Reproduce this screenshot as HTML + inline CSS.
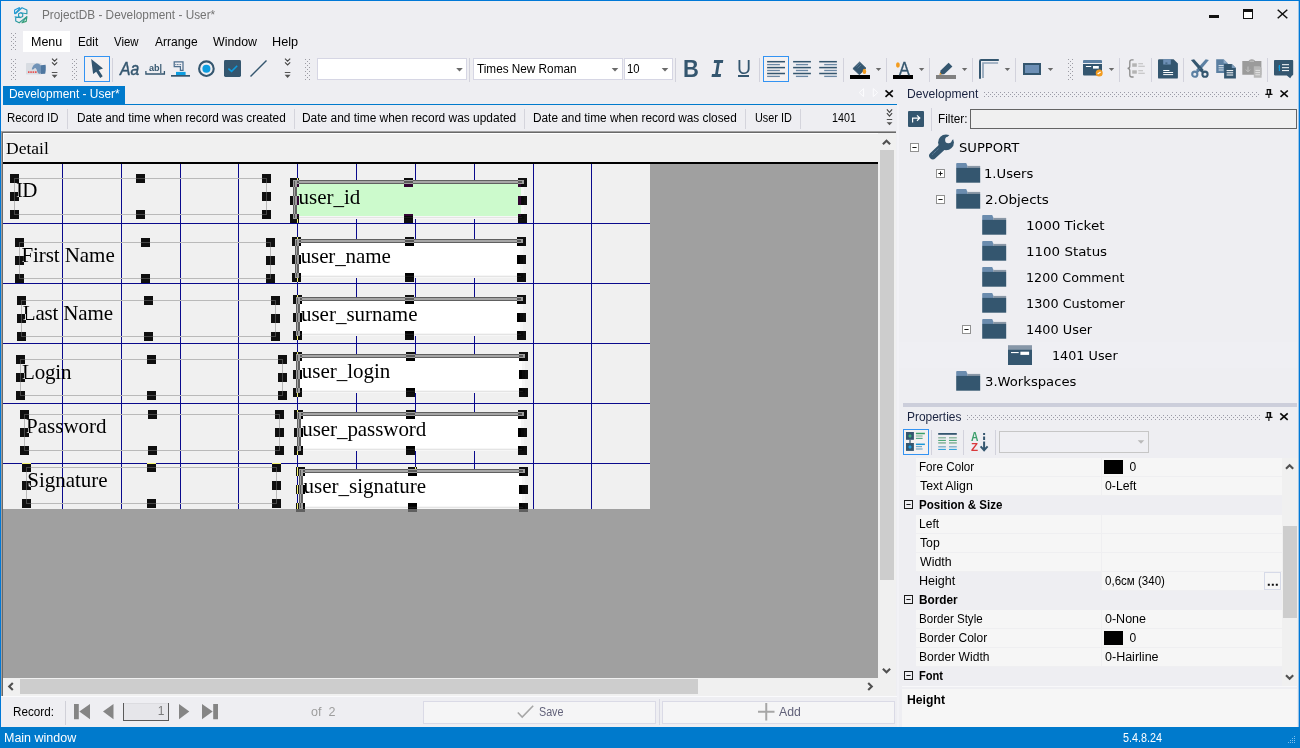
<!DOCTYPE html>
<html lang="en"><head><meta charset="utf-8"><title>ProjectDB - Development - User*</title>
<style>
html,body{margin:0;padding:0}
body{width:1300px;height:748px;overflow:hidden;position:relative;background:#eeeef2;font-family:"Liberation Sans",sans-serif;color:#000}
div,svg{position:absolute}
svg{overflow:visible}
.t{white-space:pre;line-height:0;font-size:12px;transform-origin:0 0}
.t i{display:inline-block;height:40px;width:0}
.f{font-family:"Liberation Serif",serif}
.v{font-family:"DejaVu Sans","Liberation Sans",sans-serif}
.h{width:9px;height:9px;background:#0f0f0f}
@supports (mix-blend-mode:difference){.h{background:#fff;mix-blend-mode:difference}}

</style></head><body>
<div style="left:0px;top:0px;width:1300px;height:1px;background:#0078d7;"></div>
<div style="left:0px;top:0px;width:1px;height:748px;background:#0078d7;"></div>
<div style="left:1299px;top:0px;width:1px;height:748px;background:#0078d7;"></div>
<div style="left:1298px;top:0px;width:1px;height:727px;background:rgba(0,120,215,0.35);"></div>
<div class="t" style="left:41.53px;top:-21.00px;transform:scaleX(0.9835);color:#737373;"><i></i>ProjectDB - Development - User*</div>
<div style="left:1209px;top:15px;width:10px;height:3px;background:#111;"></div>
<div style="left:1243px;top:9px;width:10px;height:10px;background:#fff;border:1px solid #111;border-top-width:3px;box-sizing:border-box;"></div>
<svg style="left:1277px;top:9px;" width="11" height="10" viewBox="0 0 11 10"><path d="M0.7 0.7L10.3 9.3M10.3 0.7L0.7 9.3" stroke="#111" stroke-width="1.5" fill="none"/></svg>
<div style="left:23px;top:31px;width:46.5px;height:21px;background:#fff;"></div>
<div class="t" style="left:31.18px;top:6.00px;transform:scaleX(1.0412);"><i></i>Menu</div>
<div class="t" style="left:77.74px;top:6.00px;transform:scaleX(0.9741);"><i></i>Edit</div>
<div class="t" style="left:113.95px;top:6.00px;transform:scaleX(0.9505);"><i></i>View</div>
<div class="t" style="left:154.98px;top:6.00px;"><i></i>Arrange</div>
<div class="t" style="left:212.95px;top:6.00px;transform:scaleX(1.0314);"><i></i>Window</div>
<div class="t" style="left:271.96px;top:6.00px;transform:scaleX(1.0557);"><i></i>Help</div>
<div style="left:3px;top:86px;width:121.5px;height:18px;background:#007acc;"></div>
<div style="left:3px;top:103.5px;width:894px;height:1.5px;background:#007acc;"></div>
<div class="t" style="left:8.52px;top:58.40px;transform:scaleX(0.9936);color:#fff;"><i></i>Development - User*</div>
<div class="t" style="left:7.06px;top:82.00px;transform:scaleX(0.9530);"><i></i>Record ID</div>
<div class="t" style="left:76.53px;top:82.00px;transform:scaleX(0.9840);"><i></i>Date and time when record was created</div>
<div class="t" style="left:302.02px;top:82.00px;transform:scaleX(0.9943);"><i></i>Date and time when record was updated</div>
<div class="t" style="left:533.03px;top:82.00px;transform:scaleX(0.9853);"><i></i>Date and time when record was closed</div>
<div class="t" style="left:754.66px;top:82.00px;transform:scaleX(0.9061);"><i></i>User ID</div>
<div class="t" style="left:831.69px;top:82.00px;transform:scaleX(0.8929);"><i></i>1401</div>
<div style="left:67.0px;top:109px;width:1px;height:20px;background:#d4d4dc;"></div>
<div style="left:293.5px;top:109px;width:1px;height:20px;background:#d4d4dc;"></div>
<div style="left:524.0px;top:109px;width:1px;height:20px;background:#d4d4dc;"></div>
<div style="left:745.0px;top:109px;width:1px;height:20px;background:#d4d4dc;"></div>
<div style="left:800.0px;top:109px;width:1px;height:20px;background:#d4d4dc;"></div>
<div style="left:1px;top:131px;width:895px;height:564.5px;background:#f0f0f0;"></div>
<div style="left:1px;top:131px;width:895px;height:1px;background:#a0a0a0;"></div>
<div style="left:2px;top:132px;width:894px;height:1px;background:#696969;"></div>
<div style="left:3px;top:133px;width:875px;height:1px;background:#fff;"></div>
<div style="left:1px;top:131px;width:1px;height:564.5px;background:#a0a0a0;"></div>
<div style="left:2px;top:132px;width:1px;height:563.5px;background:#696969;"></div>
<div style="left:3px;top:133px;width:1px;height:29px;background:#fff;"></div>
<div class="t f" style="left:6.21px;top:113.60px;font-size:17px;transform:scaleX(1.0311);"><i></i>Detail</div>
<div style="left:3px;top:162.3px;width:875px;height:1.7px;background:#000;"></div>
<div style="left:650px;top:164px;width:228px;height:514px;background:#a0a0a0;"></div>
<div style="left:3px;top:509px;width:647px;height:169px;background:#a0a0a0;"></div>
<div style="left:62px;top:164px;width:1px;height:345px;background:#0a0a8c;"></div>
<div style="left:121px;top:164px;width:1px;height:345px;background:#0a0a8c;"></div>
<div style="left:180px;top:164px;width:1px;height:345px;background:#0a0a8c;"></div>
<div style="left:238px;top:164px;width:1px;height:345px;background:#0a0a8c;"></div>
<div style="left:297px;top:164px;width:1px;height:345px;background:#0a0a8c;"></div>
<div style="left:356px;top:164px;width:1px;height:345px;background:#0a0a8c;"></div>
<div style="left:415px;top:164px;width:1px;height:345px;background:#0a0a8c;"></div>
<div style="left:474px;top:164px;width:1px;height:345px;background:#0a0a8c;"></div>
<div style="left:533px;top:164px;width:1px;height:345px;background:#0a0a8c;"></div>
<div style="left:591px;top:164px;width:1px;height:345px;background:#0a0a8c;"></div>
<div style="left:3px;top:223px;width:647px;height:1px;background:#0a0a8c;"></div>
<div style="left:3px;top:283px;width:647px;height:1px;background:#0a0a8c;"></div>
<div style="left:3px;top:343px;width:647px;height:1px;background:#0a0a8c;"></div>
<div style="left:3px;top:403px;width:647px;height:1px;background:#0a0a8c;"></div>
<div style="left:3px;top:463px;width:647px;height:1px;background:#0a0a8c;"></div>
<div style="left:14px;top:178px;width:253px;height:37px;border:1px solid #b9b9b9;box-sizing:border-box;"></div>
<div class="t f" style="left:15.99px;top:157.40px;font-size:21px;letter-spacing:-0.830px;"><i></i>ID</div>
<div style="left:19px;top:242px;width:252px;height:37px;border:1px solid #b9b9b9;box-sizing:border-box;"></div>
<div class="t f" style="left:21.41px;top:221.60px;font-size:21px;letter-spacing:-0.068px;"><i></i>First Name</div>
<div style="left:21px;top:300px;width:254.5px;height:37px;border:1px solid #b9b9b9;box-sizing:border-box;"></div>
<div class="t f" style="left:22.81px;top:280.00px;font-size:21px;letter-spacing:-0.170px;"><i></i>Last Name</div>
<div style="left:20px;top:359px;width:263px;height:37px;border:1px solid #b9b9b9;box-sizing:border-box;"></div>
<div class="t f" style="left:22.11px;top:338.60px;font-size:21px;letter-spacing:-0.191px;"><i></i>Login</div>
<div style="left:24px;top:414px;width:256px;height:37px;border:1px solid #b9b9b9;box-sizing:border-box;"></div>
<div class="t f" style="left:26.11px;top:393.40px;font-size:21px;letter-spacing:-0.011px;"><i></i>Password</div>
<div style="left:26px;top:467px;width:251px;height:37px;border:1px solid #b9b9b9;box-sizing:border-box;"></div>
<div class="t f" style="left:27.31px;top:446.50px;font-size:21px;letter-spacing:-0.024px;"><i></i>Signature</div>
<div style="left:292.5px;top:180px;width:231.0px;height:39px;background:#f6f6f6;"></div>
<div style="left:296.5px;top:184px;width:224.0px;height:31.5px;background:#ccfacc;"></div>
<div style="left:296.5px;top:216.5px;width:225.0px;height:1px;background:#e4e4e4;"></div>
<div style="left:292.5px;top:180px;width:231.0px;height:4px;background:#606060;"></div>
<div style="left:293.8px;top:181.3px;width:228.4px;height:1.4px;background:#a6a6a6;"></div>
<div style="left:292.5px;top:180px;width:4px;height:39px;background:#606060;"></div>
<div style="left:293.8px;top:181.3px;width:1.4px;height:36.4px;background:#a6a6a6;"></div>
<div class="t f" style="left:298.48px;top:163.75px;font-size:21px;letter-spacing:-0.008px;"><i></i>user_id</div>
<div style="left:294.5px;top:239px;width:228.0px;height:39px;background:#f6f6f6;"></div>
<div style="left:298.5px;top:243px;width:221.0px;height:31.5px;background:#fff;"></div>
<div style="left:298.5px;top:275.5px;width:222.0px;height:1px;background:#e4e4e4;"></div>
<div style="left:294.5px;top:239px;width:228.0px;height:4px;background:#606060;"></div>
<div style="left:295.8px;top:240.3px;width:225.4px;height:1.4px;background:#a6a6a6;"></div>
<div style="left:294.5px;top:239px;width:4px;height:39px;background:#606060;"></div>
<div style="left:295.8px;top:240.3px;width:1.4px;height:36.4px;background:#a6a6a6;"></div>
<div class="t f" style="left:300.73px;top:222.50px;font-size:21px;letter-spacing:-0.123px;"><i></i>user_name</div>
<div style="left:295.5px;top:297px;width:227.0px;height:39px;background:#f6f6f6;"></div>
<div style="left:299.5px;top:301px;width:220.0px;height:31.5px;background:#fff;"></div>
<div style="left:299.5px;top:333.5px;width:221.0px;height:1px;background:#e4e4e4;"></div>
<div style="left:295.5px;top:297px;width:227.0px;height:4px;background:#606060;"></div>
<div style="left:296.8px;top:298.3px;width:224.4px;height:1.4px;background:#a6a6a6;"></div>
<div style="left:295.5px;top:297px;width:4px;height:39px;background:#606060;"></div>
<div style="left:296.8px;top:298.3px;width:1.4px;height:36.4px;background:#a6a6a6;"></div>
<div class="t f" style="left:300.98px;top:280.80px;font-size:21px;letter-spacing:-0.013px;"><i></i>user_surname</div>
<div style="left:295.5px;top:354px;width:229.0px;height:39px;background:#f6f6f6;"></div>
<div style="left:299.5px;top:358px;width:222.0px;height:31.5px;background:#fff;"></div>
<div style="left:299.5px;top:390.5px;width:223.0px;height:1px;background:#e4e4e4;"></div>
<div style="left:295.5px;top:354px;width:229.0px;height:4px;background:#606060;"></div>
<div style="left:296.8px;top:355.3px;width:226.4px;height:1.4px;background:#a6a6a6;"></div>
<div style="left:295.5px;top:354px;width:4px;height:39px;background:#606060;"></div>
<div style="left:296.8px;top:355.3px;width:1.4px;height:36.4px;background:#a6a6a6;"></div>
<div class="t f" style="left:301.73px;top:338.00px;font-size:21px;letter-spacing:-0.008px;"><i></i>user_login</div>
<div style="left:296.5px;top:412px;width:227.0px;height:39px;background:#f6f6f6;"></div>
<div style="left:300.5px;top:416px;width:220.0px;height:31.5px;background:#fff;"></div>
<div style="left:300.5px;top:448.5px;width:221.0px;height:1px;background:#e4e4e4;"></div>
<div style="left:296.5px;top:412px;width:227.0px;height:4px;background:#606060;"></div>
<div style="left:297.8px;top:413.3px;width:224.4px;height:1.4px;background:#a6a6a6;"></div>
<div style="left:296.5px;top:412px;width:4px;height:39px;background:#606060;"></div>
<div style="left:297.8px;top:413.3px;width:1.4px;height:36.4px;background:#a6a6a6;"></div>
<div class="t f" style="left:302.23px;top:395.50px;font-size:21px;letter-spacing:-0.065px;"><i></i>user_password</div>
<div style="left:298.5px;top:469px;width:226.0px;height:40px;background:#f6f6f6;"></div>
<div style="left:302.5px;top:473px;width:219.0px;height:32.5px;background:#fff;"></div>
<div style="left:302.5px;top:506.5px;width:220.0px;height:1px;background:#e4e4e4;"></div>
<div style="left:298.5px;top:469px;width:226.0px;height:4px;background:#606060;"></div>
<div style="left:299.8px;top:470.3px;width:223.4px;height:1.4px;background:#a6a6a6;"></div>
<div style="left:298.5px;top:469px;width:4px;height:40px;background:#606060;"></div>
<div style="left:299.8px;top:470.3px;width:1.4px;height:37.4px;background:#a6a6a6;"></div>
<div class="t f" style="left:303.48px;top:452.50px;font-size:21px;letter-spacing:0.020px;"><i></i>user_signature</div>
<div class="h" style="left:10px;top:174px"></div>
<div class="h" style="left:10px;top:192px"></div>
<div class="h" style="left:10px;top:210px"></div>
<div class="h" style="left:136px;top:174px"></div>
<div class="h" style="left:136px;top:210px"></div>
<div class="h" style="left:262px;top:174px"></div>
<div class="h" style="left:262px;top:192px"></div>
<div class="h" style="left:262px;top:210px"></div>
<div class="h" style="left:15px;top:238px"></div>
<div class="h" style="left:15px;top:256px"></div>
<div class="h" style="left:15px;top:274px"></div>
<div class="h" style="left:141px;top:238px"></div>
<div class="h" style="left:141px;top:274px"></div>
<div class="h" style="left:266px;top:238px"></div>
<div class="h" style="left:266px;top:256px"></div>
<div class="h" style="left:266px;top:274px"></div>
<div class="h" style="left:17px;top:296px"></div>
<div class="h" style="left:17px;top:314px"></div>
<div class="h" style="left:17px;top:332px"></div>
<div class="h" style="left:144px;top:296px"></div>
<div class="h" style="left:144px;top:332px"></div>
<div class="h" style="left:270.5px;top:296px"></div>
<div class="h" style="left:270.5px;top:314px"></div>
<div class="h" style="left:270.5px;top:332px"></div>
<div class="h" style="left:16px;top:355px"></div>
<div class="h" style="left:16px;top:373px"></div>
<div class="h" style="left:16px;top:391px"></div>
<div class="h" style="left:147px;top:355px"></div>
<div class="h" style="left:147px;top:391px"></div>
<div class="h" style="left:278px;top:355px"></div>
<div class="h" style="left:278px;top:373px"></div>
<div class="h" style="left:278px;top:391px"></div>
<div class="h" style="left:20px;top:410px"></div>
<div class="h" style="left:20px;top:428px"></div>
<div class="h" style="left:20px;top:446px"></div>
<div class="h" style="left:148px;top:410px"></div>
<div class="h" style="left:148px;top:446px"></div>
<div class="h" style="left:275px;top:410px"></div>
<div class="h" style="left:275px;top:428px"></div>
<div class="h" style="left:275px;top:446px"></div>
<div class="h" style="left:22px;top:463px"></div>
<div class="h" style="left:22px;top:481px"></div>
<div class="h" style="left:22px;top:499px"></div>
<div class="h" style="left:147px;top:463px"></div>
<div class="h" style="left:147px;top:499px"></div>
<div class="h" style="left:272px;top:463px"></div>
<div class="h" style="left:272px;top:481px"></div>
<div class="h" style="left:272px;top:499px"></div>
<div class="h" style="left:290px;top:178px"></div>
<div class="h" style="left:290px;top:196px"></div>
<div class="h" style="left:290px;top:214px"></div>
<div class="h" style="left:404px;top:178px"></div>
<div class="h" style="left:404px;top:214px"></div>
<div class="h" style="left:518px;top:178px"></div>
<div class="h" style="left:518px;top:196px"></div>
<div class="h" style="left:518px;top:214px"></div>
<div class="h" style="left:292px;top:237px"></div>
<div class="h" style="left:292px;top:255px"></div>
<div class="h" style="left:292px;top:273px"></div>
<div class="h" style="left:405px;top:237px"></div>
<div class="h" style="left:405px;top:273px"></div>
<div class="h" style="left:517px;top:237px"></div>
<div class="h" style="left:517px;top:255px"></div>
<div class="h" style="left:517px;top:273px"></div>
<div class="h" style="left:293px;top:295px"></div>
<div class="h" style="left:293px;top:313px"></div>
<div class="h" style="left:293px;top:331px"></div>
<div class="h" style="left:405px;top:295px"></div>
<div class="h" style="left:405px;top:331px"></div>
<div class="h" style="left:517px;top:295px"></div>
<div class="h" style="left:517px;top:313px"></div>
<div class="h" style="left:517px;top:331px"></div>
<div class="h" style="left:293px;top:352px"></div>
<div class="h" style="left:293px;top:370px"></div>
<div class="h" style="left:293px;top:388px"></div>
<div class="h" style="left:406px;top:352px"></div>
<div class="h" style="left:406px;top:388px"></div>
<div class="h" style="left:519px;top:352px"></div>
<div class="h" style="left:519px;top:370px"></div>
<div class="h" style="left:519px;top:388px"></div>
<div class="h" style="left:294px;top:410px"></div>
<div class="h" style="left:294px;top:428px"></div>
<div class="h" style="left:294px;top:446px"></div>
<div class="h" style="left:406px;top:410px"></div>
<div class="h" style="left:406px;top:446px"></div>
<div class="h" style="left:518px;top:410px"></div>
<div class="h" style="left:518px;top:428px"></div>
<div class="h" style="left:518px;top:446px"></div>
<div class="h" style="left:296px;top:467px"></div>
<div class="h" style="left:296px;top:485px"></div>
<div class="h" style="left:296px;top:503px"></div>
<div class="h" style="left:408px;top:467px"></div>
<div class="h" style="left:408px;top:503px"></div>
<div class="h" style="left:519px;top:467px"></div>
<div class="h" style="left:519px;top:485px"></div>
<div class="h" style="left:519px;top:503px"></div>
<div style="left:878px;top:132.5px;width:18px;height:563px;background:#f0f0f0;"></div>
<div style="left:879.5px;top:150px;width:14.5px;height:430px;background:#cdcdcd;"></div>
<svg style="left:0px;top:0px;" width="1" height="1" viewBox="0 0 1 1"><path d="M882.9 144.3L886.5 140.7L890.1 144.3" stroke="#505050" stroke-width="2.1" fill="none"/></svg>
<svg style="left:0px;top:0px;" width="1" height="1" viewBox="0 0 1 1"><path d="M882.9 668.7L886.5 672.3L890.1 668.7" stroke="#505050" stroke-width="2.1" fill="none"/></svg>
<div style="left:3px;top:678px;width:875px;height:17.5px;background:#f0f0f0;"></div>
<div style="left:20px;top:679px;width:678px;height:15px;background:#cdcdcd;"></div>
<svg style="left:0px;top:0px;" width="1" height="1" viewBox="0 0 1 1"><path d="M12.8 682.9L9.2 686.5L12.8 690.1" stroke="#505050" stroke-width="2.1" fill="none"/></svg>
<svg style="left:0px;top:0px;" width="1" height="1" viewBox="0 0 1 1"><path d="M868.2 682.9L871.8 686.5L868.2 690.1" stroke="#505050" stroke-width="2.1" fill="none"/></svg>
<div style="left:1px;top:695.5px;width:897px;height:1.5px;background:#fafafc;"></div>
<div class="t" style="left:12.54px;top:675.80px;transform:scaleX(0.9738);"><i></i>Record:</div>
<div style="left:65px;top:701px;width:1px;height:24px;background:#d0d0d8;"></div>
<svg style="left:74px;top:704px;" width="16" height="15.2" viewBox="0 0 16 15.2"><path d="M0 0h4.8v15.2h-4.8zM16 0v15.2l-10.7-7.6z" fill="#858585"/></svg>
<svg style="left:103px;top:704px;" width="10.5" height="15.2" viewBox="0 0 10.5 15.2"><path d="M10.5 0v15.2l-10.5-7.6z" fill="#858585"/></svg>
<div style="left:123px;top:703px;width:46px;height:18px;background:#e6e6ea;border:1px solid #5a5a5a;border-top-color:#dcdce0;box-sizing:border-box;"></div>
<div style="left:123px;top:703px;width:1px;height:2px;background:#5a5a5a;"></div>
<div style="left:168px;top:703px;width:1px;height:2px;background:#5a5a5a;"></div>
<div class="t" style="left:157.84px;top:675.00px;color:#7a7a7a;"><i></i>1</div>
<svg style="left:179px;top:704px;" width="10.5" height="15.2" viewBox="0 0 10.5 15.2"><path d="M0 0v15.2l10.3-7.6z" fill="#858585"/></svg>
<svg style="left:202px;top:704px;" width="16" height="15.2" viewBox="0 0 16 15.2"><path d="M11.2 0h4.8v15.2h-4.8zM0 0v15.2l10.7-7.6z" fill="#858585"/></svg>
<div class="t" style="left:310.72px;top:675.75px;transform:scaleX(1.0450);color:#9d9d9d;"><i></i>of  2</div>
<div style="left:423px;top:700.5px;width:233px;height:23px;background:#f5f5f6;border:1px solid #dadae6;box-sizing:border-box;"></div>
<svg style="left:517px;top:705px;" width="17" height="13" viewBox="0 0 17 13"><path d="M0.8 7.5L5.2 12L16.2 0.8" stroke="#a6a6a6" stroke-width="1.6" fill="none"/></svg>
<div class="t" style="left:539.02px;top:676.25px;transform:scaleX(0.8942);color:#62627a;"><i></i>Save</div>
<div style="left:658.5px;top:699px;width:1px;height:26px;background:#d8d8e2;"></div>
<div style="left:662px;top:700.5px;width:232.5px;height:23px;background:#f5f5f6;border:1px solid #dadae6;box-sizing:border-box;"></div>
<svg style="left:757.5px;top:703px;" width="17" height="17.5" viewBox="0 0 17 17.5"><path d="M8.25 0V17.5M0 8.75H16.5" stroke="#a6a6a6" stroke-width="2" fill="none"/></svg>
<div class="t" style="left:779.48px;top:675.75px;transform:scaleX(1.0216);color:#62627a;"><i></i>Add</div>
<div style="left:0px;top:727px;width:1300px;height:21px;background:#007acc;"></div>
<div class="t" style="left:3.88px;top:702.00px;transform:scaleX(1.0408);color:#fff;"><i></i>Main window</div>
<div class="t" style="left:1123.37px;top:702.00px;transform:scaleX(0.8980);color:#fff;"><i></i>5.4.8.24</div>
<svg style="left:1288px;top:736px;" width="8" height="8" viewBox="0 0 8 8"><g fill="#7fc1ee"><rect x="6" y="0" width="1" height="1"/><rect x="4" y="2" width="1" height="1"/><rect x="6" y="2" width="1" height="1"/><rect x="2" y="4" width="1" height="1"/><rect x="4" y="4" width="1" height="1"/><rect x="6" y="4" width="1" height="1"/><rect x="0" y="6" width="1" height="1"/><rect x="2" y="6" width="1" height="1"/><rect x="4" y="6" width="1" height="1"/><rect x="6" y="6" width="1" height="1"/></g></svg>
<svg style="left:13.5px;top:6.5px;" width="14.5" height="17" viewBox="0 0 14.5 17"><defs><linearGradient id="lg" gradientUnits="userSpaceOnUse" x1="1" y1="1" x2="13" y2="16"><stop offset="0" stop-color="#1c98e4"/><stop offset="0.55" stop-color="#2a9bb0"/><stop offset="1" stop-color="#3aa05e"/></linearGradient></defs>
<g fill="none" stroke="url(#lg)" stroke-width="1.15" stroke-linejoin="round">
<path d="M0.6 2.9L5.2 0.7L6 1.2L1.1 6.6L0.6 6.4Z"/>
<path d="M1.4 6.7L8 0.7L12.9 2.9V6.8L6.5 5.7"/>
<path d="M4.6 6.8L6.6 5.8L8.7 6.8V9.5L6.6 10.5L4.6 9.5Z"/>
<path d="M0.6 9.8L6.6 10.6M1.7 10V14L5.2 15.8L12.9 9.6"/>
<path d="M8 15.8L12.9 9.6L12.2 14.4Z"/>
</g></svg>
<svg style="left:11px;top:33px;" width="5" height="18" viewBox="0 0 5 18"><g fill="#9c9ca4"><rect x="0" y="0" width="1" height="1"/><rect x="4" y="0" width="1" height="1"/><rect x="2" y="2" width="1" height="1"/><rect x="0" y="4" width="1" height="1"/><rect x="4" y="4" width="1" height="1"/><rect x="2" y="6" width="1" height="1"/><rect x="0" y="8" width="1" height="1"/><rect x="4" y="8" width="1" height="1"/><rect x="2" y="10" width="1" height="1"/><rect x="0" y="12" width="1" height="1"/><rect x="4" y="12" width="1" height="1"/><rect x="2" y="14" width="1" height="1"/><rect x="0" y="16" width="1" height="1"/><rect x="4" y="16" width="1" height="1"/></g></svg>
<svg style="left:11px;top:59px;" width="5" height="22" viewBox="0 0 5 22"><g fill="#9c9ca4"><rect x="0" y="0" width="1" height="1"/><rect x="4" y="0" width="1" height="1"/><rect x="2" y="2" width="1" height="1"/><rect x="0" y="4" width="1" height="1"/><rect x="4" y="4" width="1" height="1"/><rect x="2" y="6" width="1" height="1"/><rect x="0" y="8" width="1" height="1"/><rect x="4" y="8" width="1" height="1"/><rect x="2" y="10" width="1" height="1"/><rect x="0" y="12" width="1" height="1"/><rect x="4" y="12" width="1" height="1"/><rect x="2" y="14" width="1" height="1"/><rect x="0" y="16" width="1" height="1"/><rect x="4" y="16" width="1" height="1"/><rect x="2" y="18" width="1" height="1"/><rect x="0" y="20" width="1" height="1"/><rect x="4" y="20" width="1" height="1"/></g></svg>
<svg style="left:72px;top:59px;" width="5" height="22" viewBox="0 0 5 22"><g fill="#9c9ca4"><rect x="0" y="0" width="1" height="1"/><rect x="4" y="0" width="1" height="1"/><rect x="2" y="2" width="1" height="1"/><rect x="0" y="4" width="1" height="1"/><rect x="4" y="4" width="1" height="1"/><rect x="2" y="6" width="1" height="1"/><rect x="0" y="8" width="1" height="1"/><rect x="4" y="8" width="1" height="1"/><rect x="2" y="10" width="1" height="1"/><rect x="0" y="12" width="1" height="1"/><rect x="4" y="12" width="1" height="1"/><rect x="2" y="14" width="1" height="1"/><rect x="0" y="16" width="1" height="1"/><rect x="4" y="16" width="1" height="1"/><rect x="2" y="18" width="1" height="1"/><rect x="0" y="20" width="1" height="1"/><rect x="4" y="20" width="1" height="1"/></g></svg>
<svg style="left:305px;top:59px;" width="5" height="22" viewBox="0 0 5 22"><g fill="#9c9ca4"><rect x="0" y="0" width="1" height="1"/><rect x="4" y="0" width="1" height="1"/><rect x="2" y="2" width="1" height="1"/><rect x="0" y="4" width="1" height="1"/><rect x="4" y="4" width="1" height="1"/><rect x="2" y="6" width="1" height="1"/><rect x="0" y="8" width="1" height="1"/><rect x="4" y="8" width="1" height="1"/><rect x="2" y="10" width="1" height="1"/><rect x="0" y="12" width="1" height="1"/><rect x="4" y="12" width="1" height="1"/><rect x="2" y="14" width="1" height="1"/><rect x="0" y="16" width="1" height="1"/><rect x="4" y="16" width="1" height="1"/><rect x="2" y="18" width="1" height="1"/><rect x="0" y="20" width="1" height="1"/><rect x="4" y="20" width="1" height="1"/></g></svg>
<svg style="left:1068px;top:59px;" width="5" height="22" viewBox="0 0 5 22"><g fill="#9c9ca4"><rect x="0" y="0" width="1" height="1"/><rect x="4" y="0" width="1" height="1"/><rect x="2" y="2" width="1" height="1"/><rect x="0" y="4" width="1" height="1"/><rect x="4" y="4" width="1" height="1"/><rect x="2" y="6" width="1" height="1"/><rect x="0" y="8" width="1" height="1"/><rect x="4" y="8" width="1" height="1"/><rect x="2" y="10" width="1" height="1"/><rect x="0" y="12" width="1" height="1"/><rect x="4" y="12" width="1" height="1"/><rect x="2" y="14" width="1" height="1"/><rect x="0" y="16" width="1" height="1"/><rect x="4" y="16" width="1" height="1"/><rect x="2" y="18" width="1" height="1"/><rect x="0" y="20" width="1" height="1"/><rect x="4" y="20" width="1" height="1"/></g></svg>
<svg style="left:26px;top:63px;" width="20" height="12" viewBox="0 0 20 12"><rect x="0" y="0" width="15.5" height="11.6" rx="0.8" fill="#d8dce2"/>
<path d="M2 8.2h1.5v1.7h-1.5zM4.3 8.2h1.5v1.7h-1.5zM6.6 8.2h1.5v1.7h-1.5zM8.9 8.2h1.7v1.7h-1.7z" fill="#e85050"/>
<path d="M5.8 6.2C6.5 3 8.5 0.6 11.5 0.6C13.2 0.8 14 2 15 2.4V10.6C13 11 12 10.4 11.2 8.4C10.6 6 9.6 4.4 8.4 5.4C7.6 6.4 6.6 6.8 5.8 6.2Z" fill="#7193b7"/>
<path d="M15 2.2L19.6 1.8C20 5 19.8 8 19.2 10.8L15 10.9Z" fill="#4f77a0"/></svg>
<svg style="left:0px;top:0px;" width="1" height="1" viewBox="0 0 1 1"><path d="M52.0 58.6l2.6 2.6l2.6 -2.6M52.0 62.4l2.6 2.6l2.6 -2.6" stroke="#444" stroke-width="1.1" fill="none"/><path d="M51.800000000000004 71.9h5.6v1.1h-5.6zM51.7 74.7h5.8l-2.9 3.2z" fill="#555"/></svg>
<div style="left:84px;top:56px;width:26px;height:26px;background:#f4f1f1;border:1px solid #3393f3;box-sizing:border-box;"></div>
<svg style="left:0px;top:0px;" width="1" height="1" viewBox="0 0 1 1"><path d="M91.2 58.9L103 68.4L98.7 70L102.7 76.2L100.2 78L96.2 71.7L93.1 73.9Z" fill="#34566f"/></svg>
<div style="left:112px;top:58px;width:1px;height:24px;background:#d2d2dc;"></div>
<div class="t" style="left:119.98px;top:35.00px;font-size:18px;transform:scaleX(0.8699);color:#34566f;font-style:italic;-webkit-text-stroke:0.45px #34566f;"><i></i>Aa</div>
<div class="t" style="left:148.94px;top:30.60px;font-size:9.2px;transform:scaleX(0.9874);color:#34566f;font-weight:700;"><i></i>ab|</div>
<svg style="left:0px;top:0px;" width="1" height="1" viewBox="0 0 1 1"><path d="M145.9 71V74H164.4V71" stroke="#34566f" stroke-width="1.3" fill="none"/></svg>
<svg style="left:171px;top:61px;" width="20" height="16" viewBox="0 0 20 16"><path d="M3.2 0.9H12V9.3H9.4V5.6H3.2Z" fill="none" stroke="#4e6f8e" stroke-width="1.25"/><path d="M4.3 3.6h6.4" stroke="#4e6f8e" stroke-width="1" stroke-dasharray="1 0.6"/><rect x="5" y="10.9" width="9.6" height="3.2" fill="#0c9de0"/><rect x="0" y="14" width="19" height="1.7" fill="#34566f"/></svg>
<svg style="left:0px;top:0px;" width="1" height="1" viewBox="0 0 1 1"><circle cx="206.4" cy="68.7" r="7.3" fill="none" stroke="#34566f" stroke-width="2.1"/><circle cx="206.4" cy="68.7" r="4" fill="#0c9de0"/></svg>
<svg style="left:224px;top:60px;" width="17" height="17" viewBox="0 0 17 17"><rect x="0" y="0" width="17" height="17" rx="1.4" fill="#34566f"/><path d="M4.4 8.6L7.6 11.4L13.2 5.7" stroke="#0c9de0" stroke-width="1.5" fill="none"/></svg>
<svg style="left:0px;top:0px;" width="1" height="1" viewBox="0 0 1 1"><path d="M250.5 76.5L266.5 60.5" stroke="#34566f" stroke-width="1.4"/></svg>
<svg style="left:0px;top:0px;" width="1" height="1" viewBox="0 0 1 1"><path d="M285.0 58.6l2.6 2.6l2.6 -2.6M285.0 62.4l2.6 2.6l2.6 -2.6" stroke="#444" stroke-width="1.1" fill="none"/><path d="M284.8 71.9h5.6v1.1h-5.6zM284.70000000000005 74.7h5.8l-2.9 3.2z" fill="#555"/></svg>
<div style="left:317px;top:58px;width:150px;height:22px;background:#fff;border:1px solid #d6d6e4;box-sizing:border-box;"></div>
<svg style="left:0px;top:0px;" width="1" height="1" viewBox="0 0 1 1"><path d="M456.2 68.0h6.6l-3.3 3.6z" fill="#6a6a6a"/></svg>
<div style="left:469px;top:58px;width:1px;height:24px;background:#d2d2dc;"></div>
<div style="left:473px;top:58px;width:149.5px;height:22px;background:#fff;border:1px solid #d6d6e4;box-sizing:border-box;"></div>
<div class="t" style="left:477.24px;top:33.00px;transform:scaleX(0.9796);"><i></i>Times New Roman</div>
<svg style="left:0px;top:0px;" width="1" height="1" viewBox="0 0 1 1"><path d="M611.7 68.0h6.6l-3.3 3.6z" fill="#6a6a6a"/></svg>
<div style="left:623.5px;top:58px;width:49.5px;height:22px;background:#fff;border:1px solid #d6d6e4;box-sizing:border-box;"></div>
<div class="t" style="left:626.64px;top:33.00px;transform:scaleX(0.9394);"><i></i>10</div>
<svg style="left:0px;top:0px;" width="1" height="1" viewBox="0 0 1 1"><path d="M661.7 68.0h6.6l-3.3 3.6z" fill="#6a6a6a"/></svg>
<div style="left:675px;top:58px;width:1px;height:24px;background:#d2d2dc;"></div>
<div class="t" style="left:683.35px;top:36.90px;font-size:23.5px;transform:scaleX(0.9332);color:#34566f;font-weight:700;"><i></i>B</div>
<div class="t" style="left:711.2px;top:36.900000000000006px;font-size:25.6px;font-family:'Liberation Mono',monospace;font-style:italic;font-weight:700;color:#34566f;transform:scaleX(0.8)"><i></i>I</div>
<div class="t" style="left:736.60px;top:34.30px;font-size:19.6px;transform:scaleX(0.9953);color:#34566f;"><i></i>U</div>
<div style="left:738px;top:75.3px;width:11.3px;height:1.6px;background:#34566f;"></div>
<div style="left:759px;top:58px;width:1px;height:24px;background:#d2d2dc;"></div>
<div style="left:763px;top:56px;width:26px;height:26px;background:#f4f1f1;border:1px solid #3393f3;box-sizing:border-box;"></div>
<svg style="left:0px;top:0px;" width="1" height="1" viewBox="0 0 1 1"><path d="M767.1 61.7H785" stroke="#34566f" stroke-width="1.5"/><path d="M767.1 64.6H779.9" stroke="#6b88a4" stroke-width="1.3"/><path d="M767.1 67.6H785" stroke="#34566f" stroke-width="1.5"/><path d="M767.1 70.5H779.9" stroke="#6b88a4" stroke-width="1.3"/><path d="M767.1 73.5H785" stroke="#34566f" stroke-width="1.5"/><path d="M767.1 76.4H779.9" stroke="#6b88a4" stroke-width="1.3"/></svg>
<svg style="left:0px;top:0px;" width="1" height="1" viewBox="0 0 1 1"><path d="M793.1 61.7H810.9" stroke="#34566f" stroke-width="1.5"/><path d="M795.9 64.6H808.1" stroke="#6b88a4" stroke-width="1.3"/><path d="M793.1 67.6H810.9" stroke="#34566f" stroke-width="1.5"/><path d="M795.9 70.5H808.1" stroke="#6b88a4" stroke-width="1.3"/><path d="M793.1 73.5H810.9" stroke="#34566f" stroke-width="1.5"/><path d="M795.9 76.4H808.1" stroke="#6b88a4" stroke-width="1.3"/></svg>
<svg style="left:0px;top:0px;" width="1" height="1" viewBox="0 0 1 1"><path d="M819.2 61.7H836.9" stroke="#34566f" stroke-width="1.5"/><path d="M824.2 64.6H836.9" stroke="#6b88a4" stroke-width="1.3"/><path d="M819.2 67.6H836.9" stroke="#34566f" stroke-width="1.5"/><path d="M824.2 70.5H836.9" stroke="#6b88a4" stroke-width="1.3"/><path d="M819.2 73.5H836.9" stroke="#34566f" stroke-width="1.5"/><path d="M824.2 76.4H836.9" stroke="#6b88a4" stroke-width="1.3"/></svg>
<div style="left:843px;top:58px;width:1px;height:24px;background:#d2d2dc;"></div>
<div style="left:850px;top:75.1px;width:20px;height:3.9px;background:#000;"></div>
<svg style="left:0px;top:0px;" width="1" height="1" viewBox="0 0 1 1"><path d="M859.6 62L866 68.2L859.4 74.7L852.9 68.6Z" fill="#34566f" stroke="#34566f" stroke-width="0.8" stroke-linejoin="round"/><path d="M856.3 66.6l3.4 -3.2M857.6 68.2l3.4 -3.2" stroke="#6b88a4" stroke-width="0.6"/><ellipse cx="864.4" cy="71.4" rx="1.8" ry="2.6" fill="#f39c1f"/></svg>
<svg style="left:0px;top:0px;" width="1" height="1" viewBox="0 0 1 1"><path d="M875.8 68.1h5.4l-2.7 3z" fill="#6a6a6a"/></svg>
<div style="left:886px;top:58px;width:1px;height:24px;background:#d2d2dc;"></div>
<div style="left:893px;top:75.1px;width:20px;height:3.9px;background:#000;"></div>
<div class="t" style="left:898.57px;top:35.10px;font-size:18.2px;transform:scaleX(0.8867);color:#34566f;-webkit-text-stroke:0.3px #34566f;"><i></i>A</div>
<svg style="left:0px;top:0px;" width="1" height="1" viewBox="0 0 1 1"><ellipse cx="897.9" cy="65" rx="1.9" ry="2.7" fill="#f39c1f"/></svg>
<svg style="left:0px;top:0px;" width="1" height="1" viewBox="0 0 1 1"><path d="M918.9 68.1h5.4l-2.7 3z" fill="#6a6a6a"/></svg>
<div style="left:929px;top:58px;width:1px;height:24px;background:#d2d2dc;"></div>
<div style="left:936px;top:75.1px;width:20px;height:3.9px;background:#808080;"></div>
<svg style="left:0px;top:0px;" width="1" height="1" viewBox="0 0 1 1"><path d="M939.6 74.4L940.6 70.4L948.6 62.8L952.4 66.4L944.2 74.2Z" fill="#34566f"/><path d="M939.3 74.8L940.3 72.6L941.8 74.3Z" fill="#f39c1f"/></svg>
<svg style="left:0px;top:0px;" width="1" height="1" viewBox="0 0 1 1"><path d="M961.9 68.1h5.4l-2.7 3z" fill="#6a6a6a"/></svg>
<div style="left:972px;top:58px;width:1px;height:24px;background:#d2d2dc;"></div>
<svg style="left:0px;top:0px;" width="1" height="1" viewBox="0 0 1 1"><path d="M980 78.8V61.2Q980 60.1 981.1 60.1H998.8" stroke="#34566f" stroke-width="2" fill="none"/><path d="M983 77.9V63H998.1" stroke="#8fa3b8" stroke-width="1.7" fill="none"/></svg>
<svg style="left:0px;top:0px;" width="1" height="1" viewBox="0 0 1 1"><path d="M1004.6999999999999 68.1h5.4l-2.7 3z" fill="#6a6a6a"/></svg>
<div style="left:1015px;top:58px;width:1px;height:24px;background:#d2d2dc;"></div>
<div style="left:1022.8px;top:63px;width:18px;height:12.2px;background:#6d8fb5;border:2px solid #34566f;box-sizing:border-box;"></div>
<svg style="left:0px;top:0px;" width="1" height="1" viewBox="0 0 1 1"><path d="M1047.8 68.1h5.4l-2.7 3z" fill="#6a6a6a"/></svg>
<svg style="left:1083px;top:60px;" width="20" height="17" viewBox="0 0 20 17"><path d="M1 0H18a1 1 0 0 1 1 1V2.9H0V1a1 1 0 0 1 1 -1Z" fill="#5c80a2"/><path d="M0 3.9H19V14.5a1 1 0 0 1 -1 1H1a1 1 0 0 1 -1 -1Z" fill="#34566f"/><rect x="2.9" y="6" width="5.3" height="1" fill="#fff"/><rect x="10" y="6" width="5.8" height="2.6" fill="#fff"/><circle cx="16.2" cy="13" r="3.5" fill="#f39c1f"/><path d="M14.6 14L17.6 12" stroke="#fff" stroke-width="1.3"/></svg>
<svg style="left:0px;top:0px;" width="1" height="1" viewBox="0 0 1 1"><path d="M1108.8 68.1h5.4l-2.7 3z" fill="#6a6a6a"/></svg>
<div style="left:1119px;top:58px;width:1px;height:24px;background:#d2d2dc;"></div>
<svg style="left:1126px;top:59px;" width="20" height="19" viewBox="0 0 20 19"><path d="M7.6 0.9H5.8Q3.8 0.9 3.8 2.9V7.2Q3.8 9.2 1.6 9.4Q3.8 9.6 3.8 11.6V16Q3.8 18 5.8 18H7.6" fill="none" stroke="#8c8c8c" stroke-width="1.3"/><rect x="6.2" y="4.3" width="4.6" height="3.5" fill="#b4b4b4"/><rect x="6.2" y="11.3" width="4.6" height="3.4" fill="#b4b4b4"/><path d="M12.3 4.7H17M12.3 7.2H18.8M12.3 11.7H17M12.3 14.2H18.8" stroke="#bdbdbd" stroke-width="1.1"/></svg>
<div style="left:1151px;top:58px;width:1px;height:24px;background:#d2d2dc;"></div>
<svg style="left:1158px;top:59px;" width="20" height="20" viewBox="0 0 20 20"><path d="M1.2 0.2H15.6L19.9 4.4V18.4a1.2 1.2 0 0 1 -1.2 1.2H1.2a1.2 1.2 0 0 1 -1.2 -1.2V1.4a1.2 1.2 0 0 1 1.2 -1.2Z" fill="#34566f"/><rect x="5.2" y="0.2" width="7.6" height="5.3" fill="#6d8fb5"/><rect x="7.4" y="3.6" width="2" height="1" fill="#34566f"/><path d="M5.2 11.5H11.4M5.2 13.5H15.1M5.2 15.6H15.1" stroke="#fff" stroke-width="1"/></svg>
<div style="left:1183px;top:58px;width:1px;height:24px;background:#d2d2dc;"></div>
<svg style="left:1190px;top:59px;" width="20" height="19" viewBox="0 0 20 19"><path d="M18.9 1L15.7 0.2L6.2 10.8L8.6 13.2Z" fill="#5c80a2"/><circle cx="4.8" cy="15.2" r="2.6" fill="none" stroke="#5c80a2" stroke-width="2.1"/><path d="M6.2 13.6L9.4 10.4" stroke="#5c80a2" stroke-width="2.6"/><path d="M0.9 1L4.1 0.2L13.6 10.8L11.2 13.2Z" fill="#34566f"/><circle cx="15" cy="15.2" r="2.6" fill="none" stroke="#34566f" stroke-width="2.1"/><path d="M13.6 13.6L10.4 10.4" stroke="#34566f" stroke-width="2.6"/><circle cx="9.9" cy="9.6" r="0.6" fill="#5c80a2"/></svg>
<svg style="left:1216px;top:59px;" width="20" height="20" viewBox="0 0 20 20"><path d="M0.2 0.2H7.6L11.6 4.2V14H0.2Z" fill="#5c80a2"/><path d="M7.6 0.2V4.2H11.6Z" fill="#8fabc6"/><path d="M2.6 6.6H7.6M2.6 8.8H7.6M2.6 11H7.6" stroke="#dfe7ee" stroke-width="1"/><path d="M8.1 5H15.8L19.9 9V19.6H8.1Z" fill="#34566f"/><path d="M15.8 5V9H19.9Z" fill="#7c9cba"/><path d="M10.6 11.6H17.2M10.6 13.8H17.2M10.6 16H17.2" stroke="#fff" stroke-width="1"/></svg>
<svg style="left:1242px;top:59px;" width="20" height="19" viewBox="0 0 20 19"><path d="M0.3 2H6.5Q7.5 0.2 9.8 0.2Q12.2 0.2 13.2 2H19.4V15.8H0.3Z" fill="#9b9b9b"/><path d="M7.6 2.2H12" stroke="#c8c8c8" stroke-width="1"/><path d="M6 7.5V12.4M3.9 10.6L6 12.8L8.1 10.6" stroke="#c2c2c2" stroke-width="1" fill="none"/><path d="M11.8 7.2H17.8L19.6 9V18.7H11.8Z" fill="#b8b8b8"/><path d="M13.4 11.4H18M13.4 13.6H18M13.4 15.8H18" stroke="#e2e2e2" stroke-width="1"/></svg>
<div style="left:1267px;top:58px;width:1px;height:24px;background:#d2d2dc;"></div>
<svg style="left:1274px;top:60px;" width="20" height="19" viewBox="0 0 20 19"><path d="M0.8 0.1H18.4a0.8 0.8 0 0 1 0.8 0.8V14.6a0.8 0.8 0 0 1 -0.8 0.8H18L16.2 18.2L12.8 15.4H0.8a0.8 0.8 0 0 1 -0.8 -0.8V0.9a0.8 0.8 0 0 1 0.8 -0.8Z" fill="#34566f"/><path d="M8 4.7H15M8 7.7H15M8 10.6H15" stroke="#fff" stroke-width="1"/><path d="M5.4 5V11" stroke="#0c9de0" stroke-width="1.2"/><path d="M4.5 7.2H5.4" stroke="#0c9de0" stroke-width="1"/></svg>
<svg style="left:0px;top:0px;" width="1" height="1" viewBox="0 0 1 1"><path d="M863.6 88.6V96.6L859.2 92.6Z" fill="none" stroke="#fcfcfe" stroke-width="1"/><path d="M873.3 88.6V96.6L877.7 92.6Z" fill="none" stroke="#fcfcfe" stroke-width="1"/></svg>
<svg style="left:0px;top:0px;" width="1" height="1" viewBox="0 0 1 1"><path d="M885.5 90.3L892.8 96.8M892.8 90.3L885.5 96.8" stroke="#0a0a0a" stroke-width="1.65" fill="none"/></svg>
<svg style="left:0px;top:0px;" width="1" height="1" viewBox="0 0 1 1"><path d="M886.9 109.4l2.6 2.9l2.6 -2.9M886.9 113.2l2.6 2.9l2.6 -2.9" stroke="#444" stroke-width="1.2" fill="none"/><path d="M886.8 118.9h5.4v1h-5.4zM886.6 122.2h5.8l-2.9 3z" fill="#555"/></svg>
<div style="left:897px;top:105px;width:1.5px;height:622px;background:#f2f2f6;"></div>
<div class="t" style="left:907.31px;top:57.60px;transform:scaleX(1.0081);color:#1a2340;"><i></i>Development</div>
<div style="left:984px;top:92px;width:275px;height:5px;background-image:radial-gradient(circle at 0.5px 0.5px,#9a9aa6 0.55px,transparent 0.75px),radial-gradient(circle at 2.5px 2.5px,#9a9aa6 0.55px,transparent 0.75px);background-size:4px 4px;"></div>
<svg style="left:1265px;top:89px;" width="8" height="10" viewBox="0 0 8 10"><path d="M1.6 0.6H6.2M2.3 0.6V5.2M5.6 0.6V5.2M4.9 0.6V5.2M0.3 5.4H7.5M3.9 5.4V8.9" stroke="#0a0a0a" stroke-width="1.1" fill="none"/></svg>
<svg style="left:0px;top:0px;" width="1" height="1" viewBox="0 0 1 1"><path d="M1280.5 90.5L1287.8 96.9M1287.8 90.5L1280.5 96.9" stroke="#0a0a0a" stroke-width="1.65" fill="none"/></svg>
<svg style="left:908px;top:111px;" width="16" height="16" viewBox="0 0 16 16"><rect width="16" height="16" rx="1" fill="#34566f"/><path d="M4.6 11.6V7.1H11.4M9 4.4L11.8 7.1L9 9.8" stroke="#fff" stroke-width="1.2" fill="none"/></svg>
<div style="left:931px;top:108px;width:1px;height:23px;background:#d2d2dc;"></div>
<div class="t" style="left:937.78px;top:83.00px;transform:scaleX(0.9830);"><i></i>Filter:</div>
<div style="left:970px;top:109px;width:327px;height:19.5px;background:#f0f0f0;border:1px solid #646464;box-sizing:border-box;"></div>
<svg style="left:910px;top:143px;" width="9" height="9" viewBox="0 0 9 9"><rect x="0.5" y="0.5" width="8" height="8" fill="#fff" stroke="#919191" stroke-width="1"/><path d="M2.4 4.5H6.6" stroke="#1a1a1a" stroke-width="1"/></svg>
<svg style="left:928px;top:133.5px;" width="27" height="26" viewBox="0 0 27 26"><path d="M4.9 21.6L16 11.2" stroke="#34566f" stroke-width="7.4" stroke-linecap="round"/><circle cx="18" cy="8.4" r="7.9" fill="#34566f"/><circle cx="20.4" cy="6" r="3.3" fill="#eeeef2"/><path d="M20.4 6L28 -1.6" stroke="#eeeef2" stroke-width="5.6"/><path d="M4.4 20.4L10.6 14.6" stroke="#7d9cbb" stroke-width="0.8" stroke-dasharray="1.2 0.8"/></svg>
<div class="t v" style="left:958.65px;top:112.00px;font-size:13px;transform:scaleX(1.0101);"><i></i>SUPPORT</div>
<svg style="left:936px;top:169px;" width="9" height="9" viewBox="0 0 9 9"><rect x="0.5" y="0.5" width="8" height="8" fill="#fff" stroke="#919191" stroke-width="1"/><path d="M2.4 4.5H6.6" stroke="#1a1a1a" stroke-width="1"/><path d="M4.5 2.4V6.6" stroke="#1a1a1a" stroke-width="1"/></svg>
<svg style="left:955.75px;top:162.6px;" width="25" height="20" viewBox="0 0 25 20"><path d="M1 0.1H10.2L11.5 2.9V5H0.2V0.9Q0.2 0.1 1 0.1Z" fill="#6b8cae"/><path d="M11.3 2.9H24.2V5H11.3Z" fill="#8a98a7"/><path d="M0.2 4.9H24.2V19.7H0.2Z" fill="#34566f"/></svg>
<div class="t v" style="left:984.32px;top:138.00px;font-size:13px;transform:scaleX(1.0105);"><i></i>1.Users</div>
<svg style="left:936px;top:195px;" width="9" height="9" viewBox="0 0 9 9"><rect x="0.5" y="0.5" width="8" height="8" fill="#fff" stroke="#919191" stroke-width="1"/><path d="M2.4 4.5H6.6" stroke="#1a1a1a" stroke-width="1"/></svg>
<svg style="left:955.75px;top:188.6px;" width="25" height="20" viewBox="0 0 25 20"><path d="M1 0.1H10.2L11.5 2.9V5H0.2V0.9Q0.2 0.1 1 0.1Z" fill="#6b8cae"/><path d="M11.3 2.9H24.2V5H11.3Z" fill="#8a98a7"/><path d="M0.2 4.9H24.2V19.7H0.2Z" fill="#34566f"/></svg>
<div class="t v" style="left:984.76px;top:164.00px;font-size:13px;transform:scaleX(1.0385);"><i></i>2.Objects</div>
<svg style="left:982px;top:214.6px;" width="25" height="20" viewBox="0 0 25 20"><path d="M1 0.1H10.2L11.5 2.9V5H0.2V0.9Q0.2 0.1 1 0.1Z" fill="#6b8cae"/><path d="M11.3 2.9H24.2V5H11.3Z" fill="#8a98a7"/><path d="M0.2 4.9H24.2V19.7H0.2Z" fill="#34566f"/></svg>
<div class="t v" style="left:1025.53px;top:190.00px;font-size:13px;transform:scaleX(1.0378);"><i></i>1000 Ticket</div>
<svg style="left:982px;top:240.6px;" width="25" height="20" viewBox="0 0 25 20"><path d="M1 0.1H10.2L11.5 2.9V5H0.2V0.9Q0.2 0.1 1 0.1Z" fill="#6b8cae"/><path d="M11.3 2.9H24.2V5H11.3Z" fill="#8a98a7"/><path d="M0.2 4.9H24.2V19.7H0.2Z" fill="#34566f"/></svg>
<div class="t v" style="left:1025.54px;top:216.00px;font-size:13px;transform:scaleX(1.0314);"><i></i>1100 Status</div>
<svg style="left:982px;top:266.6px;" width="25" height="20" viewBox="0 0 25 20"><path d="M1 0.1H10.2L11.5 2.9V5H0.2V0.9Q0.2 0.1 1 0.1Z" fill="#6b8cae"/><path d="M11.3 2.9H24.2V5H11.3Z" fill="#8a98a7"/><path d="M0.2 4.9H24.2V19.7H0.2Z" fill="#34566f"/></svg>
<div class="t v" style="left:1025.62px;top:242.00px;font-size:13px;transform:scaleX(0.9754);"><i></i>1200 Comment</div>
<svg style="left:982px;top:292.6px;" width="25" height="20" viewBox="0 0 25 20"><path d="M1 0.1H10.2L11.5 2.9V5H0.2V0.9Q0.2 0.1 1 0.1Z" fill="#6b8cae"/><path d="M11.3 2.9H24.2V5H11.3Z" fill="#8a98a7"/><path d="M0.2 4.9H24.2V19.7H0.2Z" fill="#34566f"/></svg>
<div class="t v" style="left:1025.60px;top:268.00px;font-size:13px;transform:scaleX(0.9853);"><i></i>1300 Customer</div>
<svg style="left:982px;top:318.6px;" width="25" height="20" viewBox="0 0 25 20"><path d="M1 0.1H10.2L11.5 2.9V5H0.2V0.9Q0.2 0.1 1 0.1Z" fill="#6b8cae"/><path d="M11.3 2.9H24.2V5H11.3Z" fill="#8a98a7"/><path d="M0.2 4.9H24.2V19.7H0.2Z" fill="#34566f"/></svg>
<div class="t v" style="left:1025.60px;top:294.00px;font-size:13px;transform:scaleX(0.9894);"><i></i>1400 User</div>
<svg style="left:962px;top:325px;" width="9" height="9" viewBox="0 0 9 9"><rect x="0.5" y="0.5" width="8" height="8" fill="#fff" stroke="#919191" stroke-width="1"/><path d="M2.4 4.5H6.6" stroke="#1a1a1a" stroke-width="1"/></svg>
<div style="left:898.5px;top:342px;width:398.5px;height:26px;background:#efeff3;"></div>
<svg style="left:1008px;top:345px;" width="24" height="20" viewBox="0 0 24 20"><path d="M0 0.2H24V4.8H0Z" fill="#8797a8"/><path d="M0 4.6H24V20H0Z" fill="#34566f"/><rect x="3" y="7" width="7.7" height="1.1" fill="#fff"/><rect x="12.4" y="6.7" width="8.7" height="3.2" fill="#fff"/></svg>
<div class="t v" style="left:1051.86px;top:319.80px;font-size:13px;transform:scaleX(0.9818);"><i></i>1401 User</div>
<svg style="left:955.75px;top:370.6px;" width="25" height="20" viewBox="0 0 25 20"><path d="M1 0.1H10.2L11.5 2.9V5H0.2V0.9Q0.2 0.1 1 0.1Z" fill="#6b8cae"/><path d="M11.3 2.9H24.2V5H11.3Z" fill="#8a98a7"/><path d="M0.2 4.9H24.2V19.7H0.2Z" fill="#34566f"/></svg>
<div class="t v" style="left:984.75px;top:346.00px;font-size:13px;transform:scaleX(1.0127);"><i></i>3.Workspaces</div>
<div style="left:903px;top:403px;width:394px;height:3.6px;background:#cccedb;"></div>
<div class="t" style="left:907.02px;top:380.50px;transform:scaleX(0.9947);color:#1a2340;"><i></i>Properties</div>
<div style="left:967px;top:415px;width:293px;height:5px;background-image:radial-gradient(circle at 0.5px 0.5px,#9a9aa6 0.55px,transparent 0.75px),radial-gradient(circle at 2.5px 2.5px,#9a9aa6 0.55px,transparent 0.75px);background-size:4px 4px;"></div>
<svg style="left:1265px;top:412px;" width="8" height="10" viewBox="0 0 8 10"><path d="M1.6 0.6H6.2M2.3 0.6V5.2M5.6 0.6V5.2M4.9 0.6V5.2M0.3 5.4H7.5M3.9 5.4V8.9" stroke="#0a0a0a" stroke-width="1.1" fill="none"/></svg>
<svg style="left:0px;top:0px;" width="1" height="1" viewBox="0 0 1 1"><path d="M1280.3 413.3L1287.7 419.9M1287.7 413.3L1280.3 419.9" stroke="#0a0a0a" stroke-width="1.65" fill="none"/></svg>
<div style="left:903px;top:429px;width:26px;height:26px;background:#f4f1f1;border:1px solid #3393f3;box-sizing:border-box;"></div>
<svg style="left:906px;top:432px;" width="20" height="19" viewBox="0 0 20 19"><rect x="0" y="0" width="7.9" height="7.8" fill="#34566f"/><rect x="0" y="11" width="7.9" height="7.9" fill="#34566f"/><path d="M4 7.8V11" stroke="#34566f" stroke-width="1.2"/><path d="M4 1.9L5.9 3.9L4 5.9L2.1 3.9Z" fill="#3fae7c"/><path d="M4 13L5.9 15L4 17L2.1 15Z" fill="#1c9de0"/><path d="M9.9 1.5H18.9" stroke="#3aa06a" stroke-width="1.5"/><path d="M9.9 4H16.6" stroke="#93bba6" stroke-width="1.3"/><path d="M9.9 6.4H16.6" stroke="#5aa98a" stroke-width="1.2"/><path d="M9.9 12.3H18.9" stroke="#1c98d8" stroke-width="1.5"/><path d="M9.9 14.6H16" stroke="#6fa8c8" stroke-width="1.2"/><path d="M9.9 17H16.6" stroke="#8ab4cc" stroke-width="1.4"/></svg>
<div style="left:931px;top:430px;width:1px;height:25px;background:#d2d2dc;"></div>
<svg style="left:0px;top:0px;" width="1" height="1" viewBox="0 0 1 1"><path d="M938.2 433.9H956.8" stroke="#34566f" stroke-width="1.8"/><path d="M938.2 437.8H945.9M949 437.8H956.8" stroke="#93bba6" stroke-width="1.6"/><path d="M938.2 440.4H945.9M949 440.4H956.8" stroke="#3aa06a" stroke-width="1"/><path d="M938.2 442.9H945.9M949 442.9H956.8" stroke="#93bba6" stroke-width="1.6"/><path d="M938.2 446.8H945.9M949 446.8H956.8" stroke="#8ab4cc" stroke-width="1.6"/><path d="M938.2 449.4H945.9M949 449.4H956.8" stroke="#1c98d8" stroke-width="1"/></svg>
<div style="left:963px;top:430px;width:1px;height:25px;background:#d2d2dc;"></div>
<div class="t" style="left:970.65px;top:400.50px;font-size:11.9px;transform:scaleX(0.8628);color:#3a9e6a;font-weight:700;"><i></i>A</div>
<div class="t" style="left:970.76px;top:410.90px;font-size:11.4px;transform:scaleX(1.0134);color:#d9383a;font-weight:700;"><i></i>Z</div>
<svg style="left:0px;top:0px;" width="1" height="1" viewBox="0 0 1 1"><path d="M984.1 433.1V435.1M984.1 436.4V440M984.1 441.6V450M980.6 446.4L984.1 450.2L987.6 446.4" stroke="#34566f" stroke-width="2" fill="none"/></svg>
<div style="left:995px;top:430px;width:1px;height:25px;background:#d2d2dc;"></div>
<div style="left:999px;top:431px;width:150px;height:21.5px;background:#efeff3;border:1px solid #c6c6c6;box-sizing:border-box;"></div>
<svg style="left:0px;top:0px;" width="1" height="1" viewBox="0 0 1 1"><path d="M1137.7 440.3h6.6l-3.3 3.4z" fill="#b9b9b9"/></svg>
<div style="left:916px;top:457.5px;width:365.5px;height:228px;background:#f6f6f6;"></div>
<div style="left:1282px;top:457.5px;width:15.5px;height:228px;background:#f0f0f0;"></div>
<div style="left:1282.5px;top:526px;width:14px;height:92px;background:#cdcdcd;"></div>
<svg style="left:0px;top:0px;" width="1" height="1" viewBox="0 0 1 1"><path d="M1286.0 468.8L1289.6 465.2L1293.1999999999998 468.8" stroke="#505050" stroke-width="2.1" fill="none"/></svg>
<svg style="left:0px;top:0px;" width="1" height="1" viewBox="0 0 1 1"><path d="M1286.0 675.2L1289.6 678.8L1293.1999999999998 675.2" stroke="#505050" stroke-width="2.1" fill="none"/></svg>
<div style="left:916px;top:476px;width:366px;height:1px;background:#efeff1;"></div>
<div style="left:1100.7px;top:457.5px;width:1px;height:19px;background:#efeff1;"></div>
<div class="t" style="left:919.14px;top:430.50px;transform:scaleX(0.9719);"><i></i>Fore Color</div>
<div style="left:1104px;top:460px;width:19px;height:13.8px;background:#000;"></div>
<div class="t" style="left:1129.53px;top:430.50px;"><i></i>0</div>
<div style="left:916px;top:495px;width:366px;height:1px;background:#efeff1;"></div>
<div style="left:1100.7px;top:476.5px;width:1px;height:19px;background:#efeff1;"></div>
<div class="t" style="left:919.83px;top:449.50px;transform:scaleX(1.0273);"><i></i>Text Align</div>
<div class="t" style="left:1104.52px;top:449.50px;transform:scaleX(1.0205);"><i></i>0-Left</div>
<div style="left:903px;top:495.5px;width:379px;height:19px;background:#eeeef2;"></div>
<svg style="left:904px;top:500px;" width="9" height="9" viewBox="0 0 9 9"><rect x="0.5" y="0.5" width="8" height="8" fill="none" stroke="#1a1a1a" stroke-width="1"/><path d="M2.4 4.5H6.6" stroke="#1a1a1a" stroke-width="1"/></svg>
<div class="t" style="left:919.34px;top:468.50px;transform:scaleX(0.9617);font-weight:700;"><i></i>Position &amp; Size</div>
<div style="left:916px;top:533px;width:366px;height:1px;background:#efeff1;"></div>
<div style="left:1100.7px;top:514.5px;width:1px;height:19px;background:#efeff1;"></div>
<div class="t" style="left:919.12px;top:487.50px;"><i></i>Left</div>
<div style="left:916px;top:552px;width:366px;height:1px;background:#efeff1;"></div>
<div style="left:1100.7px;top:533.5px;width:1px;height:19px;background:#efeff1;"></div>
<div class="t" style="left:919.83px;top:506.50px;transform:scaleX(1.0195);"><i></i>Top</div>
<div style="left:916px;top:571px;width:366px;height:1px;background:#efeff1;"></div>
<div style="left:1100.7px;top:552.5px;width:1px;height:19px;background:#efeff1;"></div>
<div class="t" style="left:920.05px;top:525.50px;transform:scaleX(1.0283);"><i></i>Width</div>
<div style="left:916px;top:590px;width:366px;height:1px;background:#efeff1;"></div>
<div style="left:1100.7px;top:571.5px;width:1px;height:19px;background:#efeff1;"></div>
<div style="left:916px;top:571.5px;width:184.7px;height:19px;background:#eeeef2;"></div>
<div class="t" style="left:919.07px;top:544.50px;transform:scaleX(1.0469);"><i></i>Height</div>
<div class="t" style="left:1104.55px;top:544.50px;transform:scaleX(0.9620);"><i></i>0,6см (340)</div>
<div style="left:903px;top:590.5px;width:379px;height:19px;background:#eeeef2;"></div>
<svg style="left:904px;top:595px;" width="9" height="9" viewBox="0 0 9 9"><rect x="0.5" y="0.5" width="8" height="8" fill="none" stroke="#1a1a1a" stroke-width="1"/><path d="M2.4 4.5H6.6" stroke="#1a1a1a" stroke-width="1"/></svg>
<div class="t" style="left:919.32px;top:563.50px;transform:scaleX(0.9824);font-weight:700;"><i></i>Border</div>
<div style="left:916px;top:628px;width:366px;height:1px;background:#efeff1;"></div>
<div style="left:1100.7px;top:609.5px;width:1px;height:19px;background:#efeff1;"></div>
<div class="t" style="left:919.15px;top:582.50px;transform:scaleX(0.9642);"><i></i>Border Style</div>
<div class="t" style="left:1104.51px;top:582.50px;transform:scaleX(1.0426);"><i></i>0-None</div>
<div style="left:916px;top:647px;width:366px;height:1px;background:#efeff1;"></div>
<div style="left:1100.7px;top:628.5px;width:1px;height:19px;background:#efeff1;"></div>
<div class="t" style="left:919.12px;top:601.50px;"><i></i>Border Color</div>
<div style="left:1104px;top:631px;width:19px;height:13.8px;background:#000;"></div>
<div class="t" style="left:1129.53px;top:601.50px;"><i></i>0</div>
<div style="left:916px;top:666px;width:366px;height:1px;background:#efeff1;"></div>
<div style="left:1100.7px;top:647.5px;width:1px;height:19px;background:#efeff1;"></div>
<div class="t" style="left:919.11px;top:620.50px;transform:scaleX(1.0063);"><i></i>Border Width</div>
<div class="t" style="left:1104.51px;top:620.50px;transform:scaleX(1.0427);"><i></i>0-Hairline</div>
<div style="left:903px;top:666.5px;width:379px;height:19px;background:#eeeef2;"></div>
<svg style="left:904px;top:671px;" width="9" height="9" viewBox="0 0 9 9"><rect x="0.5" y="0.5" width="8" height="8" fill="none" stroke="#1a1a1a" stroke-width="1"/><path d="M2.4 4.5H6.6" stroke="#1a1a1a" stroke-width="1"/></svg>
<div class="t" style="left:919.37px;top:639.50px;transform:scaleX(0.9259);font-weight:700;"><i></i>Font</div>
<div style="left:1264px;top:572px;width:17px;height:18px;background:#f6f6f6;border:1px solid #d6dae8;box-sizing:border-box;"></div>
<svg style="left:0px;top:0px;" width="1" height="1" viewBox="0 0 1 1"><path d="M1267.8 583.8h2v2h-2zM1271.8 583.8h2v2h-2zM1275.8 583.8h2v2h-2z" fill="#0a0a0a"/></svg>
<div style="left:901.5px;top:688.5px;width:395.5px;height:38.5px;background:#f6f6f6;"></div>
<div style="left:901.5px;top:686.3px;width:395.5px;height:1.2px;background:#f8f8fa;"></div>
<div class="t" style="left:906.69px;top:663.75px;transform:scaleX(1.0166);font-weight:700;"><i></i>Height</div>
</body></html>
